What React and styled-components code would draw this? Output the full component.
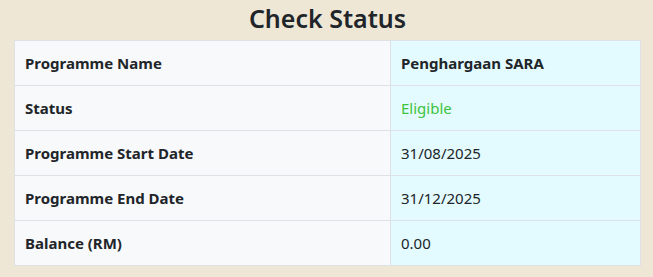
import React from "react";
import styled, { createGlobalStyle } from "styled-components";

const GlobalStyle = createGlobalStyle`
  html, body {
    margin: 0;
    padding: 0;
    background: #efe7d6;
  }
  body {
    font-family: "Noto Sans", "Open Sans", sans-serif;
    color: #212529;
  }
`;

const Page = styled.div`
  padding: 0 12px 0 14px;
`;

const Title = styled.h2`
  margin: 0;
  height: 40px;
  line-height: 36px;
  text-align: center;
  font-size: 25px;
  font-weight: 600;
  color: #212529;
`;

const Table = styled.table`
  width: 100%;
  table-layout: fixed;
  border-collapse: collapse;
  border: 1px solid #dee2e6;
  font-size: 15px;
`;

const Row = styled.tr`
  height: 45px;
`;

const Label = styled.th`
  width: 376px;
  box-sizing: border-box;
  padding: 0 10px;
  text-align: left;
  font-weight: 700;
  background: #f8f9fb;
  border: 1px solid #dee2e6;
`;

const Value = styled.td`
  padding: 0 10px;
  background: #e3fbfe;
  border: 1px solid #dee2e6;
  font-weight: ${(p) => (p.$bold ? 700 : 400)};
  color: ${(p) => (p.$ok ? "#3cc33c" : "#212529")};
`;

const rows = [
  { label: "Programme Name", value: "Penghargaan SARA", bold: true },
  { label: "Status", value: "Eligible", ok: true },
  { label: "Programme Start Date", value: "31/08/2025" },
  { label: "Programme End Date", value: "31/12/2025" },
  { label: "Balance (RM)", value: "0.00" },
];

export default function App() {
  return (
    <>
      <GlobalStyle />
      <Page>
        <Title>Check Status</Title>
        <Table>
          <tbody>
            {rows.map((r) => (
              <Row key={r.label}>
                <Label>{r.label}</Label>
                <Value $bold={r.bold} $ok={r.ok}>
                  {r.value}
                </Value>
              </Row>
            ))}
          </tbody>
        </Table>
      </Page>
    </>
  );
}
